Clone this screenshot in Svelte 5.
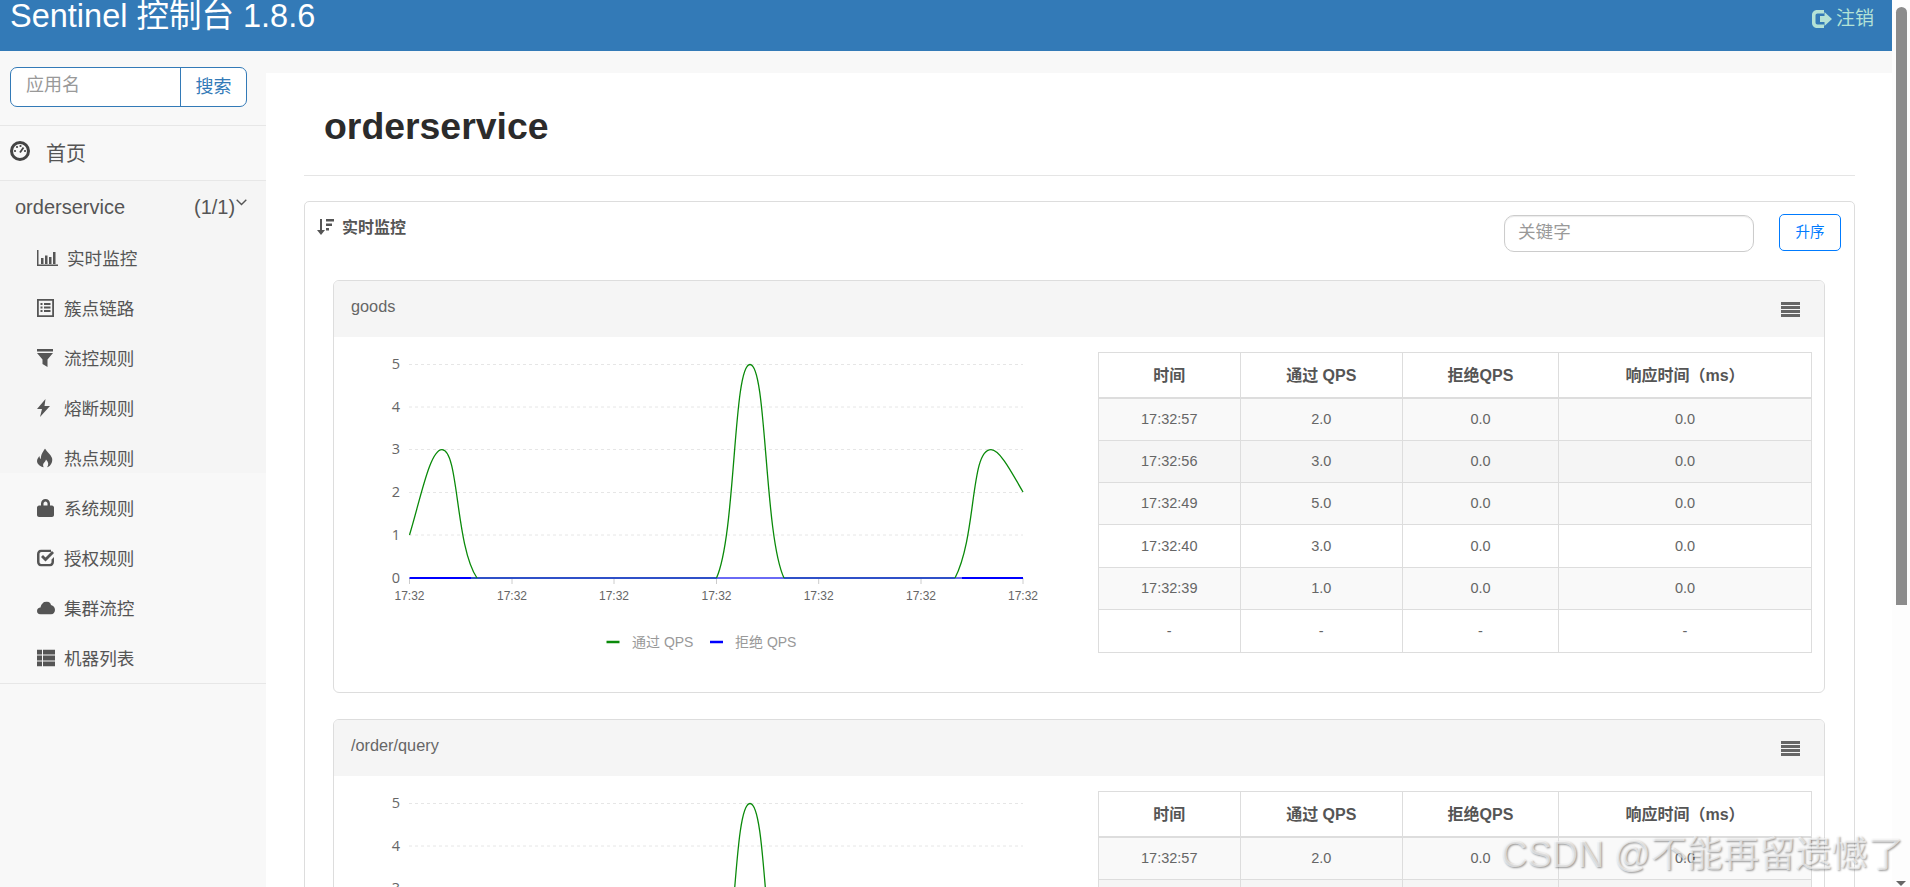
<script>
  const menu = [
    ['bar', '实时监控'], ['list', '簇点链路'], ['filter', '流控规则'], ['flash', '熔断规则'], ['fire', '热点规则'],
    ['lock', '系统规则'], ['check', '授权规则'], ['cloud', '集群流控'], ['th', '机器列表']
  ];
  const rows = [
    ['17:32:57', '2.0', '0.0', '0.0'], ['17:32:56', '3.0', '0.0', '0.0'], ['17:32:49', '5.0', '0.0', '0.0'],
    ['17:32:40', '3.0', '0.0', '0.0'], ['17:32:39', '1.0', '0.0', '0.0'], ['-', '-', '-', '-']
  ];
  const gridY = [364.5, 407, 449.5, 492.5, 535, 578];
  const ticks = [409.5, 512, 614, 716.5, 818.7, 921, 1023];
  const cards = ['goods', '/order/query'];
  const curve = 'M409.5 535C421 497 430 449.7 442 449.7C459 449.7 455 545 477 578M716.5 578C736 535 733 364.5 750 364.5C767 364.5 764 535 784 578M955 578C977 535 970 449.7 991 449.7C1000 449.7 1012 473 1023 492';
</script>

<div class="app">
  <div class="page">
    <header class="top">
      <div class="brand">Sentinel 控制台 1.8.6</div>
      <div class="logout">
        <svg width="20" height="18" viewBox="0 0 20 18"><path d="M5 0h7v3.500H5.500C4.300 3.500 3.500 4.300 3.500 5.500v7c0 1.200.8 2 2 2H12V18H5c-2.800 0-5-2.200-5-5V5c0-2.800 2.200-5 5-5z" /><path d="M8 6h4.500V2L20 9l-7.500 7v-4H8z" /></svg>
        <span>注销</span>
      </div>
    </header>
    <div class="body">
      <aside class="side">
        <div class="search">
          <div class="appname">应用名</div>
          <div class="searchbtn">搜索</div>
        </div>
        <div class="home">
          <svg class="homeicon" width="20" height="20" viewBox="0 0 20 20"><circle cx="10" cy="10" r="8.500" fill="#f8f8f8" stroke="#444" stroke-width="3" /><path d="M10 11.500L13.500 6.500" stroke="#444" stroke-width="1.800" /><circle cx="5" cy="10" r="1.100" fill="#444" /><circle cx="7" cy="6" r="1.100" fill="#444" /><circle cx="10.500" cy="5" r="1.100" fill="#444" /><circle cx="15" cy="10" r="1.100" fill="#444" /></svg>
          <span>首页</span>
        </div>
        <div class="group">
          <div class="grouphead">
            <span class="gname">orderservice</span>
            <span class="gcount">(1/1)</span>
            <svg class="chev" width="11" height="7" viewBox="0 0 11 7"><path d="M.7.800L5.500 5.500L10.300.800" fill="none" stroke="#555" stroke-width="1.400" /></svg>
          </div>
          {#each menu as [icon, label], i}
            <div class="item" class:first={i === 0}>
              <span class="ico">
                {#if icon === 'bar'}
                  <svg width="21" height="16" viewBox="0 0 21 16"><path d="M0 0h1.500v14.500H21V16H0zM4 8h2.500v6H4zM8 5.500h2.500V14H8zM12 7h2.500v7H12zM16 2h2.500v12H16z" /></svg>
                {:else if icon === 'list'}
                  <svg width="17" height="18" viewBox="0 0 17 18"><path fill-rule="evenodd" d="M0 0h17v18H0zM1.800 1.800v14.400h13.400V1.800zM3.500 4h2v2h-2zM7 4h6.500v2H7zM3.500 7.500h2v2h-2zM7 7.500h6.500v2H7zM3.500 11h2v2h-2zM7 11h6.500v2H7z" /></svg>
                {:else if icon === 'filter'}
                  <svg width="16" height="18" viewBox="0 0 16 18"><path d="M0 0h16v2.500H0zM0 4h16l-5.500 6.500V18L5.500 15v-4.500z" /></svg>
                {:else if icon === 'flash'}
                  <svg width="13" height="18" viewBox="0 0 13 18"><path d="M8.500 0L0 10h5l-2 8L13 7H7.500z" /></svg>
                {:else if icon === 'fire'}
                  <svg width="16" height="19" viewBox="0 0 16 19"><path d="M8 0c1.500 3 5.500 5.500 7 9.500c1 3.500-1 8-5 9.500c2-3 1.500-5.500-1-8c-.5 2-1.500 2.500-2.500 4c-.8 1.500-.3 3 .5 4C3 18 0 15.500 0 12.500C0 10.500 1.500 8.500 2.500 7.500c0 1.500.5 2.500 1.500 3C3.500 6.500 6 3.500 8 0z" /></svg>
                {:else if icon === 'lock'}
                  <svg width="17" height="18" viewBox="0 0 17 18"><path fill-rule="evenodd" d="M4 6.500V4.500C4 2 6 0 8.500 0S13 2 13 4.500v2h2c1 0 2 1 2 2V16c0 1-1 2-2 2H2c-1 0-2-1-2-2V8.500c0-1 1-2 2-2zM6.500 6.500h4V4.500c0-1-1-2-2-2s-2 1-2 2z" /></svg>
                {:else if icon === 'check'}
                  <svg width="17" height="17" viewBox="0 0 17 17"><path d="M4.500 0H14v2.500H4.500c-1.200 0-2 .8-2 2v8c0 1.200.8 2 2 2h8c1.200 0 2-.8 2-2V10L17 7.500v5c0 2.500-2 4.500-4.500 4.500h-8C2 17 0 15 0 12.500v-8C0 2 2 0 4.500 0z" /><path d="M4 7.500L6 5.500L8.500 8L15 1.500L17 3.500L8.500 12z" /></svg>
                {:else if icon === 'cloud'}
                  <svg width="18" height="13" viewBox="0 0 18 13"><path d="M4 13C1.500 13 0 11.500 0 9.500C0 7.500 1.500 6 3.500 6C4 3 6.500 0 9.500 0C12 0 13.500 1.500 14 3.500C16.500 4 18 6 18 8.500C18 11 16 13 13.500 13z" /></svg>
                {:else}
                  <svg width="18" height="17" viewBox="0 0 18 17"><path d="M0 0h5v5H0zM6 0h12v5H6zM0 6h5v5H0zM6 6h12v5H6zM0 12h5v5H0zM6 12h12v5H6z" /></svg>
                {/if}
              </span>
              <span class="itemtext">{label}</span>
            </div>
          {/each}
          <div class="rule"></div>
        </div>
      </aside>
      <main class="main">
        <div class="content">
          <h1>orderservice</h1>
          <section class="box">
            <div class="boxhead">
              <div class="boxtitle">
                <svg width="17" height="16" viewBox="0 0 17 16"><path d="M3 0h2v11h3l-4 5l-4-5h3zM9 0h8v2.500H9zM9 4.500h6v2.500H9zM9 9h3v2.500H9z" fill="#555" /></svg>
                <span>实时监控</span>
              </div>
              <div class="keyword">关键字</div>
              <div class="asc">升序</div>
            </div>
            {#each cards as name}
              <div class="card">
                <div class="cardhead">
                  <span class="cardname">{name}</span>
                  <span class="burger"><i></i><i></i><i></i><i></i></span>
                </div>
                <div class="cardbody">
                  <svg class="chart" width="750" height="355" viewBox="334 337 750 355">
                    {#each gridY.slice(0, 5) as y}
                      <line x1="409" x2="1023" y1={y} y2={y} stroke="#e6e6e6" stroke-dasharray="3 3" />
                    {/each}
                    {#each gridY as y, i}
                      <text x="400" y={y + 4.5} class="ylabel">{5 - i}</text>
                    {/each}
                    {#each ticks as x}
                      <line x1={x} x2={x} y1="578" y2="584" stroke="#ccc" />
                      <text x={x} y="600" class="xlabel">17:32</text>
                    {/each}
                    <line x1="409.500" x2="1023" y1="578" y2="578" stroke="#00f" stroke-width="2" />
                    <line x1="471" x2="716.500" y1="578" y2="578" stroke="#2f50c8" stroke-width="2" />
                    <line x1="784" x2="955" y1="578" y2="578" stroke="#2f50c8" stroke-width="2" />
                    <line x1="716.500" x2="784" y1="578" y2="578" stroke="#6a6af5" stroke-width="2" />
                    <line x1="955" x2="962" y1="578" y2="578" stroke="#6a6af5" stroke-width="2" />
                    <path d={curve} fill="none" stroke="#0a8a0a" stroke-width="1.300" />
                    <line x1="606.500" x2="619.500" y1="642" y2="642" stroke="#0a8a0a" stroke-width="2.500" />
                    <text x="632" y="647" class="legend">通过 QPS</text>
                    <line x1="710" x2="723" y1="642" y2="642" stroke="#00f" stroke-width="2.500" />
                    <text x="735" y="647" class="legend">拒绝 QPS</text>
                  </svg>
                  <table>
                    <thead>
                      <tr><th class="c1">时间</th><th class="c2">通过 QPS</th><th class="c3">拒绝QPS</th><th class="c4">响应时间（ms）</th></tr>
                    </thead>
                    <tbody>
                      {#each rows as row}
                        <tr>{#each row as cell}<td>{cell}</td>{/each}</tr>
                      {/each}
                    </tbody>
                  </table>
                </div>
              </div>
            {/each}
          </section>
        </div>
      </main>
    </div>
  </div>
  <div class="scroll">
    <div class="thumb"></div>
    <div class="arrow"></div>
  </div>
  <div class="watermark">CSDN @不能再留遗憾了</div>
</div>

<style>
  :global(body) {
    margin: 0;
    overflow: hidden;
    background: #fff;
  }
  .app {
    position: relative;
    display: flex;
    width: 1910px;
    height: 887px;
    overflow: hidden;
    font-family: "Liberation Sans", "Noto Sans CJK SC", sans-serif;
    color: #555;
  }
  .page {
    width: 1892px;
    display: flex;
    flex-direction: column;
  }
  .top {
    flex: none;
    height: 51px;
    background: #337ab7;
    display: flex;
    justify-content: space-between;
    overflow: hidden;
  }
  .brand {
    margin: -4px 0 0 10px;
    font-size: 32.500px;
    line-height: 40px;
    color: #fff;
  }
  .logout {
    display: flex;
    align-items: center;
    gap: 4px;
    height: 18px;
    margin: 10px 18px 0 0;
    color: #b4e2d6;
    font-size: 19px;
    line-height: 18px;
  }
  .logout svg {
    fill: #b4e2d6;
  }
  .body {
    flex: 1;
    display: flex;
    min-height: 0;
  }
  .side {
    flex: none;
    width: 266px;
    background: #f8f8f8;
  }
  .search {
    display: flex;
    height: 40px;
    box-sizing: border-box;
    margin: 16px 19px 0 10px;
    background: #fff;
    border: 1px solid #337ab7;
    border-radius: 7px;
    font-size: 18px;
    line-height: 34px;
  }
  .appname {
    flex: 1;
    padding-left: 15px;
    color: #999;
  }
  .searchbtn {
    width: 66px;
    box-sizing: border-box;
    border-left: 1px solid #337ab7;
    text-align: center;
    line-height: 38px;
    color: #337ab7;
  }
  .home {
    display: flex;
    align-items: center;
    height: 54px;
    margin-top: 18px;
    border-top: 1px solid #e7e7e7;
    border-bottom: 1px solid #e7e7e7;
    font-size: 20px;
    line-height: 50px;
  }
  .homeicon {
    margin: 0 17px 4px 10px;
  }
  .home span {
    margin: 2px 0 0 -1px;
  }
  .group {
    background: #f5f5f5;
    height: 292px;
  }
  .grouphead {
    display: flex;
    align-items: center;
    height: 52px;
    padding-left: 15px;
    font-size: 20px;
    box-sizing: border-box;
  }
  .gname {
    width: 179px;
  }
  .chev {
    margin: -10px 0 0 1px;
  }
  .item {
    position: relative;
    display: flex;
    align-items: center;
    height: 50px;
    padding-left: 64px;
    font-size: 17.600px;
  }
  .item.first {
    padding-left: 67px;
  }
  .itemtext {
    margin-top: -2px;
  }
  .rule {
    height: 1px;
    background: #e7e7e7;
  }
  .ico {
    position: absolute;
    left: 37px;
    top: 50%;
    transform: translateY(-50%);
    display: flex;
  }
  .ico svg {
    fill: #555;
  }
  .main {
    flex: 1;
    min-width: 0;
    padding-top: 22px;
    background: #f8f8f8;
  }
  .content {
    background: #fff;
    padding: 0 37px 0 38px;
    height: 100%;
    box-sizing: border-box;
  }
  h1 {
    margin: 0 0 25px;
    height: 103px;
    box-sizing: border-box;
    padding: 32px 0 0 20px;
    border-bottom: 1px solid #e5e5e5;
    font-size: 37.400px;
    line-height: 43px;
    font-weight: 700;
    color: #2b2b2b;
  }
  .box {
    border: 1px solid #ddd;
    border-radius: 5px;
    padding: 0 29px 0 28px;
    height: 900px;
  }
  .boxhead {
    position: relative;
    display: flex;
    height: 78px;
    margin: 0 -28px 0 -28px;
  }
  .boxtitle {
    display: flex;
    align-items: center;
    gap: 8px;
    height: 18px;
    margin: 15px 0 0 12px;
    font-size: 16px;
    font-weight: 700;
    color: #555;
    flex: 1;
  }
  .boxtitle svg {
    margin-top: 2px;
  }
  .keyword {
    width: 250px;
    height: 37px;
    box-sizing: border-box;
    margin: 13px 25px 0 0;
    padding-left: 13px;
    border: 1px solid #ccc;
    border-radius: 10px;
    font-size: 17.600px;
    line-height: 33px;
    color: #999;
    box-shadow: inset 0 1px 1px rgba(0, 0, 0, .08);
  }
  .asc {
    width: 62px;
    height: 37px;
    box-sizing: border-box;
    margin: 12px 12px 0 0;
    border: 1px solid #007bff;
    border-radius: 5px;
    font-size: 14.500px;
    line-height: 35px;
    text-align: center;
    color: #007bff;
  }
  .card {
    border: 1px solid #ddd;
    border-radius: 6px;
    margin-bottom: 26px;
    width: 1492px;
    box-sizing: border-box;
    overflow: hidden;
  }
  .cardhead {
    display: flex;
    align-items: center;
    justify-content: space-between;
    height: 56px;
    padding: 0 24px 0 17px;
    background: #f5f5f5;
    font-size: 16.300px;
    color: #666;
  }
  .cardname {
    margin-top: -6px;
  }
  .burger {
    display: flex;
    flex-direction: column;
    gap: 1px;
    width: 19px;
  }
  .burger i {
    display: block;
    height: 3px;
    background: #666;
  }
  .cardbody {
    display: flex;
    height: 355px;
  }
  .chart {
    flex: none;
  }
  .ylabel {
    font-family: "Open Sans", sans-serif;
    font-size: 14.500px;
    fill: #666;
    text-anchor: end;
  }
  .xlabel {
    font-size: 12px;
    fill: #666;
    text-anchor: middle;
  }
  .legend {
    font-size: 14px;
    fill: #999;
  }
  table {
    flex: none;
    align-self: flex-start;
    margin: 15px 0 0 14px;
    width: 714px;
    table-layout: fixed;
    border-collapse: collapse;
    font-size: 14.500px;
    color: #666;
    text-align: center;
  }
  th {
    height: 45px;
    padding: 0 0 2px;
    box-sizing: border-box;
    border: 1px solid #ddd;
    border-bottom-width: 2px;
    font-size: 16px;
    font-weight: 700;
    color: #555;
  }
  .c1 { width: 141.500px; }
  .c2 { width: 162.500px; }
  .c3 { width: 156px; }
  td {
    height: 42px;
    box-sizing: border-box;
    padding: 0 0 1px;
    border: 1px solid #ddd;
  }
  tbody tr:nth-child(3n+1) td,
  tbody tr:last-child td {
    height: 43px;
  }
  tbody tr:nth-child(odd) {
    background: #f9f9f9;
  }
  tbody tr:nth-child(2) {
    background: #f5f5f5;
  }
  tbody tr:last-child {
    background: #fff;
  }
  .scroll {
    position: relative;
    width: 18px;
    background: #fdfdfd;
  }
  .thumb {
    width: 11px;
    height: 598px;
    margin: 7px 0 0 4px;
    border-radius: 6px 6px 0 0;
    background: #8c8c8c;
  }
  .arrow {
    position: absolute;
    left: 4px;
    bottom: 1px;
    border-left: 5.500px solid transparent;
    border-right: 5.500px solid transparent;
    border-top: 5px solid #666;
  }
  .watermark {
    position: absolute;
    right: 6px;
    bottom: 12px;
    font-size: 36.200px;
    line-height: 40px;
    white-space: nowrap;
    color: rgba(255, 255, 255, .6);
    text-shadow: 1px 1px 2px rgba(0, 0, 0, .4);
  }
</style>
